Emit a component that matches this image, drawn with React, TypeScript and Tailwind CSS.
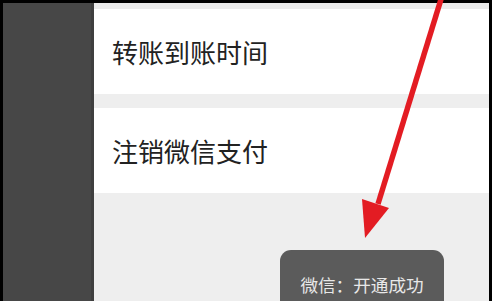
export default function App() {
  return (
    <div
      className="relative flex h-[301px] w-[492px] overflow-hidden bg-black pl-[3px] pr-[3px] pt-[3px]"
      style={{ fontFamily: '"Noto Sans CJK SC", "Noto Sans", sans-serif' }}
    >
      {/* left dark rail */}
      <div className="w-[91px] shrink-0 border-r-[3px] border-[#3f3f3f] bg-[#474747]" />

      {/* settings list */}
      <div className="flex flex-1 flex-col bg-[#eeeeee]">
        <div className="h-[6px] bg-[#ebebeb]" />
        <div className="flex h-[85px] items-center bg-white pl-[18px] text-[26px] text-[#222]">
          转账到账时间
        </div>
        <div className="h-[14px]" />
        <div className="flex h-[85px] items-center bg-white pl-[18px] text-[26px] text-[#222]">
          注销微信支付
        </div>
      </div>

      {/* toast */}
      <div className="absolute left-[280px] top-[250px] flex h-[70px] w-[164px] items-start justify-center rounded-[11px] bg-[#5b5b5b] pt-[22px] text-[17.6px] text-[#e8e8e8]">
        微信：开通成功
      </div>

      {/* red annotation arrow */}
      <svg className="absolute left-0 top-0" width="492" height="301" viewBox="0 0 492 301">
        <line x1="442" y1="-4" x2="378" y2="204" stroke="#e31c23" strokeWidth="5.5" />
        <polygon points="362,199 389,208 365,238" fill="#e31c23" />
      </svg>
    </div>
  )
}
